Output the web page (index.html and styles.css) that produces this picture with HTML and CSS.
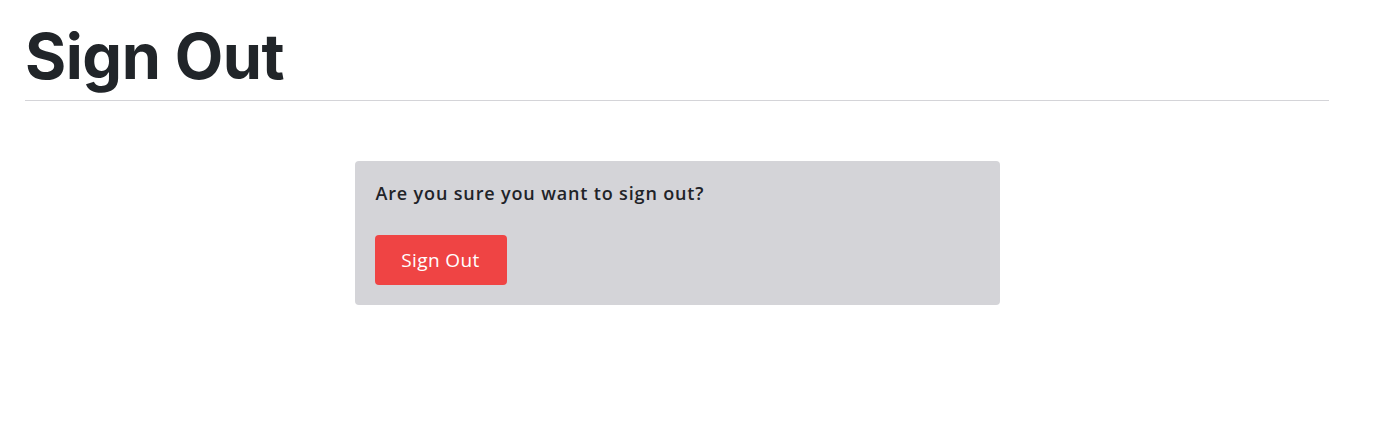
FILE: index.html
```html
<!DOCTYPE html>
<html lang="en">
<head>
<meta charset="utf-8">
<title>Sign Out</title>
<link rel="stylesheet" href="styles.css">
</head>
<body>
<main class="page">
  <h1 class="title">Sign Out</h1>
  <section class="card">
    <p class="question">Are you sure you want to sign out?</p>
    <button class="btn-danger" type="button">Sign Out</button>
  </section>
</main>
</body>
</html>
```
FILE: styles.css
```css
html, body {
  margin: 0;
  padding: 0;
  background: #ffffff;
}
body {
  font-family: Inter, "Noto Sans", sans-serif;
  color: #212529;
}
.page {
  padding: 0 45px 0 25px;
}
.title {
  margin: 0;
  padding-top: 16px;
  font-size: 63px;
  line-height: 80px;
  font-weight: 700;
  letter-spacing: -0.5px;
  color: #212529;
  border-bottom: 1px solid #d4d4d8;
  padding-bottom: 4px;
}
.card {
  width: 645px;
  box-sizing: border-box;
  margin: 60px auto 0;
  background: #d4d4d8;
  border-radius: 4px;
  padding: 20px 20px 20px 20px;
}
.question {
  margin: 0 0 30px;
  font-family: "Open Sans", sans-serif;
  font-size: 18px;
  line-height: 24px;
  font-weight: 600;
  letter-spacing: 0.85px;
  color: #1f2328;
  padding-left: 1px;
}
.btn-danger {
  display: block;
  width: 132px;
  height: 50px;
  border: 0;
  border-radius: 4px;
  background: #ef4444;
  color: #ffffff;
  font-family: "Open Sans", sans-serif;
  font-size: 19px;
  letter-spacing: 0.4px;
  padding: 0;
  cursor: pointer;
}
```
